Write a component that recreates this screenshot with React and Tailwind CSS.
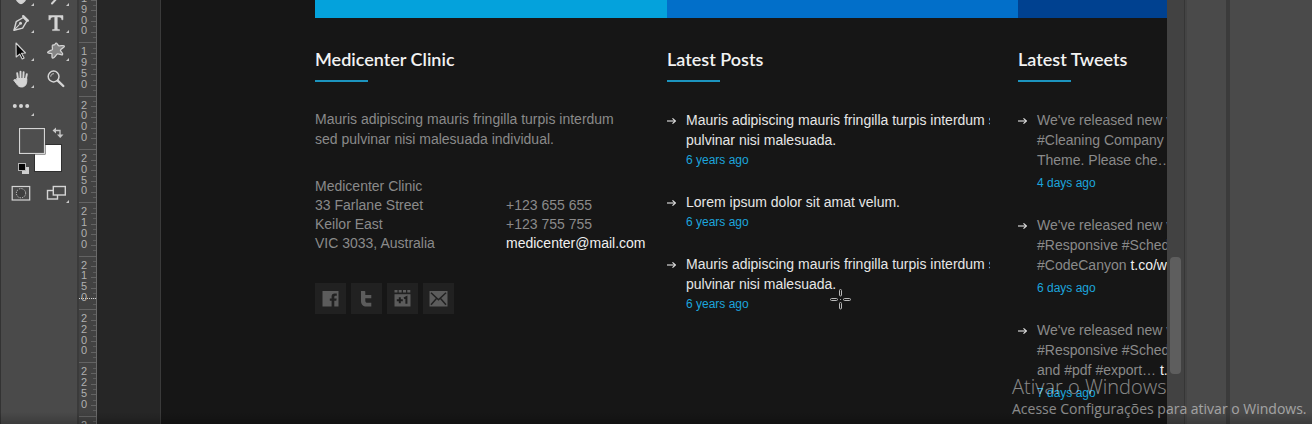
import React from "react";

const I = "#d4d4d4";

function Corner() {
  return (
    <svg className="absolute bottom-1 right-0 size-[3px]" viewBox="0 0 3 3">
      <path d="M3 0V3H0Z" fill="#c8c8c8" />
    </svg>
  );
}

function Tool({ label, corner = true, children }) {
  return (
    <button type="button" aria-label={label} className="relative flex items-center justify-end pr-[3px]">
      <svg className="size-5" viewBox="0 0 20 20" fill="none" stroke={I} strokeWidth="1.4" strokeLinecap="round" strokeLinejoin="round">
        {children}
      </svg>
      {corner && <Corner />}
    </button>
  );
}

function Toolbar() {
  return (
    <aside className="w-[77px] shrink-0 border-l border-[#333] bg-[#4a4a4a] pl-[2px]">
      <div className="-mt-[18px] grid h-[138px] w-[66px] grid-cols-[31px_35px] grid-rows-5">
        <Tool label="Dodge">
          <path d="M5 11c0-3 3-4 5-4s5 1 5 4-3 6.500-5 6.500-5-3.500-5-6.500z" fill={I} />
        </Tool>
        <Tool label="Burn">
          <path d="M6 17.500L12 11l4-5" strokeWidth="2" />
        </Tool>
        <Tool label="Pen">
          <path d="M3 17.200L5.200 8.700 12.300 4.500l3.500 3.600-4.200 7z" />
          <path d="M3 17.200l5.300-5.500" strokeWidth="1.100" />
          <circle cx="9.500" cy="10.300" r="1.500" fill={I} stroke="none" />
          <path d="M12.200 3.200l4.600 4.500" strokeWidth="2.400" />
        </Tool>
        <Tool label="Type">
          <path d="M3 2.500h14v4.300h-1.200C15.400 4.800 14.800 4 13 4h-1.700v11.200c0 1 .7 1.300 2.200 1.400v1H6.500v-1c1.500-.1 2.200-.4 2.200-1.400V4H7C5.200 4 4.600 4.800 4.200 6.800H3z" fill={I} stroke={I} strokeWidth=".5" />
        </Tool>
        <Tool label="Path selection">
          <path d="M5 2l9.500 10-4 .2 2.600 4.800-1.900 1-2.500-4.900L5.200 16z" fill="#080808" strokeWidth="1.100" />
        </Tool>
        <Tool label="Custom shape">
          <path d="M9.700 2.300c1.300-1 1.900 2.200 3.300 2.500 1.600.3 5-1 5.400.4.400 1.300-3.900 2.400-4 4-.1 1.400 3.100 3 2.200 4.300-.9 1.200-3.400-1-5.100-.6-1.600.4-2.500 4-4.600 4.200-1.700.1-.3-3.800-1.200-4.500-.8-.7-4 .2-4.100-1.200 0-1.300 3.900-1.800 4.700-2.800.7-1-.8-4.200.3-4.600 1-.4 1.900 1.200 3.100-1.700z" fill="#858585" strokeWidth="1.300" />
        </Tool>
        <Tool label="Hand">
          <path d="M7 10L6.200 4.200M9.500 9.500V2.600M12.300 9.500l.3-6.400M14.800 10.500l1-5.300" strokeWidth="1.900" />
          <path d="M5.800 9.500h10v2.200c0 3.800-1.900 6.300-5 6.300-2.700 0-3.700-1-5.200-3.100L2.700 11c1-.9 2-.7 3.500 1z" fill={I} strokeWidth="1" />
        </Tool>
        <Tool label="Zoom" corner={false}>
          <circle cx="7.600" cy="7.500" r="5.400" strokeWidth="1.500" />
          <path d="M4.800 7.200c.2-1.500 1.200-2.400 2.600-2.500" strokeWidth="1" />
          <path d="M11.700 11.700l5.600 5.300" strokeWidth="2.400" />
        </Tool>
        <Tool label="Edit toolbar">
          <g fill={I} stroke="none">
            <circle cx="3.800" cy="10" r="2" />
            <circle cx="10" cy="10" r="2" />
            <circle cx="16.200" cy="10" r="2" />
          </g>
        </Tool>
      </div>
      <div className="mt-[6px] pl-[13px]">
        <svg className="h-[48px] w-[50px]" viewBox="0 0 50 48">
          <rect x="18.500" y="18.500" width="27" height="27" fill="#fff" stroke="#303030" />
          <rect x="2.500" y="1.500" width="27" height="27" fill="#2b2b2b" />
          <rect x="3.500" y="2.500" width="25" height="25" fill="#4e4e4e" stroke="#d4d4d4" strokeWidth="1.200" />
          <path d="M39 4.500h5v5" fill="none" stroke="#c8c8c8" strokeWidth="1.300" />
          <path d="M40 1.500v6l-3.500-3zM41 8.500h6.500L44.200 12z" fill="#c8c8c8" />
          <rect x="6" y="41" width="7" height="7" fill="#d0d0d0" />
          <rect x="2.500" y="37.500" width="7" height="7" fill="#050505" stroke="#b5b5b5" />
        </svg>
      </div>
      <div className="mt-[5px] grid h-[28px] w-[66px] grid-cols-[31px_35px]">
        <Tool label="Quick mask" corner={false}>
          <rect x="1.200" y="3.500" width="17.500" height="13.500" strokeLinejoin="miter" strokeWidth="1.200" />
          <circle cx="10" cy="10.200" r="4.600" strokeDasharray="1.200 1.200" strokeWidth="1" strokeLinecap="butt" fill="#3e3e3e" />
        </Tool>
        <Tool label="Screen mode">
          <rect x="1.500" y="7.500" width="10" height="8.500" strokeLinejoin="miter" />
          <rect x="7.300" y="3.500" width="12" height="8.500" fill="#4a4a4a" strokeLinejoin="miter" />
        </Tool>
      </div>
    </aside>
  );
}

const marks = ["1900", "1950", "2000", "2050", "2100", "2150", "2200", "2250", "2300"];

function Ruler() {
  return (
    <div className="relative w-[20px] shrink-0 border-l-2 border-r border-l-[#3a3a3a] border-r-[#6a6a6a] bg-[#424242]">
      <div className="-mt-[11px] grid h-[480px] grid-rows-9 font-['Liberation_Sans',sans-serif] text-[11px] text-[#b0b0b0]">
        {marks.map((m) => (
          <div key={m} className="flex justify-between border-t border-[#636363]">
            <div className="grid grid-rows-4 pb-[6px] pl-[2px] pt-[3px] leading-[11px]">
              {m.split("").map((d, i) => (
                <span key={i} className="h-0">{d}</span>
              ))}
            </div>
            <div className="flex flex-col items-end">
              {[0, 1, 2, 3, 4].map((t) => (
                <React.Fragment key={t}>
                  <span className={t === 0 ? "flex-1" : "w-[5px] flex-1 border-t border-[#636363]"} />
                  <span className="w-[3px] flex-1 border-t border-[#5c5c5c]" />
                </React.Fragment>
              ))}
            </div>
          </div>
        ))}
      </div>
      <div className="absolute left-0 right-0 top-[298px] border-t border-dotted border-[#d0d0d0]" />
    </div>
  );
}

function Heading({ children }) {
  return (
    <>
      <h2 className="font-['Lato','Noto_Sans',sans-serif] text-[18px] font-semibold leading-6 text-[#f2f2f2]">{children}</h2>
      <div className="mt-[9px] h-[2px] w-[53px] bg-[#1c94be]" />
    </>
  );
}

function Arrow() {
  return (
    <svg className="mt-[7px] h-[8px] w-[9px] shrink-0" viewBox="0 0 9 8">
      <path d="M0 4h8" stroke="#e6e6e6" strokeWidth="1.100" />
      <path d="M5.500 1.400L8.500 4 5.500 6.600" fill="none" stroke="#e6e6e6" strokeWidth="1.200" />
    </svg>
  );
}

const long = ["Mauris adipiscing mauris fringilla turpis interdum s", "pulvinar nisi malesuada."];
const posts = [long, ["Lorem ipsum dolor sit amat velum."], long];

const tweets = [
  { lines: ["We've released new v", "#Cleaning Company", "Theme. Please che…"], date: "4 days ago" },
  { lines: ["We've released new v", "#Responsive #Sched", "#CodeCanyon "], link: "t.co/w", date: "6 days ago" },
  { lines: ["We've released new v", "#Responsive #Sched", "and #pdf #export… "], link: "t.", date: "7 days ago" },
];

function Social({ label, children }) {
  return (
    <a href="#" aria-label={label} className="flex size-[31px] items-center justify-center bg-[#212121]">
      <svg className="size-[19px]" viewBox="0 0 19 19" fill="#5c5c5c">{children}</svg>
    </a>
  );
}

function Page() {
  return (
    <main className="min-w-0 flex-1 overflow-hidden border-l border-[#3a3a3a] bg-[#161616] pl-[154px] font-['Liberation_Sans',sans-serif] text-[14px] leading-5 text-[#8a8a8a]">
      <div className="grid h-[18px] grid-cols-[352px_351px_minmax(352px,1fr)]">
        <div className="bg-[#04a2dc]" />
        <div className="bg-[#026fc9]" />
        <div className="bg-[#004190]" />
      </div>
      <div className="grid grid-cols-[352px_351px_minmax(352px,1fr)] pt-[29px]">
        <section>
          <Heading>Medicenter Clinic</Heading>
          <p className="mt-[27px]">
            Mauris adipiscing mauris fringilla turpis interdum
            <br />
            sed pulvinar nisi malesuada individual.
          </p>
          <div className="mt-[28px] grid grid-cols-[191px_auto] items-end leading-[19px]">
            <address className="not-italic">
              Medicenter Clinic
              <br />
              33 Farlane Street
              <br />
              Keilor East
              <br />
              VIC 3033, Australia
            </address>
            <div>
              +123 655 655
              <br />
              +123 755 755
              <br />
              <a href="mailto:medicenter@mail.com" className="text-[#f0f0f0]">medicenter@mail.com</a>
            </div>
          </div>
          <div className="mt-[30px] flex gap-[5px]">
            <Social label="Facebook">
              <path d="M1.500 2h16v15.500h-4.200v-5.700h2l.4-2.400h-2.400V8c0-.8.400-1.200 1.300-1.200h1.200V4.500h-2c-2.200 0-3.200 1.200-3.200 3.100v1.800H8.800v2.400h1.800v5.700H1.500z" />
            </Social>
            <Social label="Twitter">
              <path d="M4 2h3.500c.6 0 .8.300.8.800V6h6v3.200h-6v2.300c0 1.600.7 2.300 2.300 2.300h3.700V17.500H9.500C6 17.500 4 15.500 4 12z" />
            </Social>
            <Social label="Google Plus">
              <path d="M1.500 1h3v2.500h-3zM5.700 1h3v2.500h-3zM10 1h3v2.500h-3zM14.300 1h3v2.500h-3z" />
              <path d="M1.500 5.200h16v12.300h-16z" />
              <path d="M3.800 11.300h6M6.800 8.300v6M11 9.300l2.400-1.200v6.700" fill="none" stroke="#1d1d1d" strokeWidth="2" />
            </Social>
            <Social label="Email">
              <path d="M.5 2h18v15.500H.5z" />
              <path d="M2 3.800l7.500 7 7.500-7M2 15.800l5.700-6.500M17 15.800l-5.700-6.500" fill="none" stroke="#212121" strokeWidth="1.500" />
            </Social>
          </div>
        </section>

        <section>
          <Heading>Latest Posts</Heading>
          <ul className="mt-[28px] flex flex-col gap-[22px]">
            {posts.map((lines, i) => (
              <li key={i} className="flex gap-[10px]">
                <Arrow />
                <div className="w-[304px] overflow-hidden whitespace-nowrap">
                  <a href="#" className="text-[#e6e6e6]">
                    {lines.map((l) => <span key={l} className="block">{l}</span>)}
                  </a>
                  <p className="text-[12px] text-[#1ca4dc]">6 years ago</p>
                </div>
              </li>
            ))}
          </ul>
        </section>

        <section>
          <Heading>Latest Tweets</Heading>
          <ul className="mt-[28px] flex flex-col gap-[22px]">
            {tweets.map((t, i) => (
              <li key={i} className="flex gap-[10px]">
                <Arrow />
                <div className="whitespace-nowrap">
                  {t.lines.map((l, j) => (
                    <p key={j}>
                      {l}
                      {j === 2 && t.link && <a href="#" className="text-[#f0f0f0]">{t.link}</a>}
                    </p>
                  ))}
                  <p className="mt-[3px] text-[12px] text-[#1ca4dc]">{t.date}</p>
                </div>
              </li>
            ))}
          </ul>
        </section>
      </div>
    </main>
  );
}

export default function App() {
  return (
    <div className="relative flex h-screen overflow-hidden bg-[#4a4a4a]">
      <Toolbar />
      <Ruler />
      <div className="w-[63px] shrink-0 bg-[#262626]" />
      <Page />
      <div className="flex w-[18px] shrink-0 flex-col border-r border-[#363636] bg-[#424242] pl-[3px] pt-[257px]">
        <div className="h-[117px] w-[11px] rounded-[4px] bg-[#5e5e5e]" />
      </div>
      <div className="w-[41px] shrink-0 border-l-2 border-[#444] bg-[#4a4a4a]" />
      <div className="w-[86px] shrink-0 border-l-4 border-[#3b3b3b] bg-[#4a4a4a]" />

      <svg className="absolute left-[830px] top-[289px] size-[21px]" viewBox="0 0 21 21" fill="#161616" stroke="#b9b9b9" strokeWidth="1">
        <rect x="9.500" y=".5" width="2" height="6.500" rx="1" />
        <rect x="9.500" y="13.500" width="2" height="6.500" rx="1" />
        <rect x=".5" y="9.500" width="7" height="2" rx="1" />
        <rect x="13.500" y="9.500" width="7" height="2" rx="1" />
        <circle cx="10.500" cy="10.500" r=".6" fill="#b9b9b9" stroke="none" />
      </svg>

      <div className="pointer-events-none absolute inset-x-0 bottom-0 h-3 bg-linear-to-b from-transparent to-black/20" />
      <div className="pointer-events-none absolute bottom-[5px] right-0 w-[300px] whitespace-nowrap font-['Open_Sans',sans-serif] text-white/50">
        <p className="text-[20px] font-light leading-6">Ativar o Windows</p>
        <p className="text-[14px] leading-5">Acesse Configurações para ativar o Windows.</p>
      </div>
    </div>
  );
}
